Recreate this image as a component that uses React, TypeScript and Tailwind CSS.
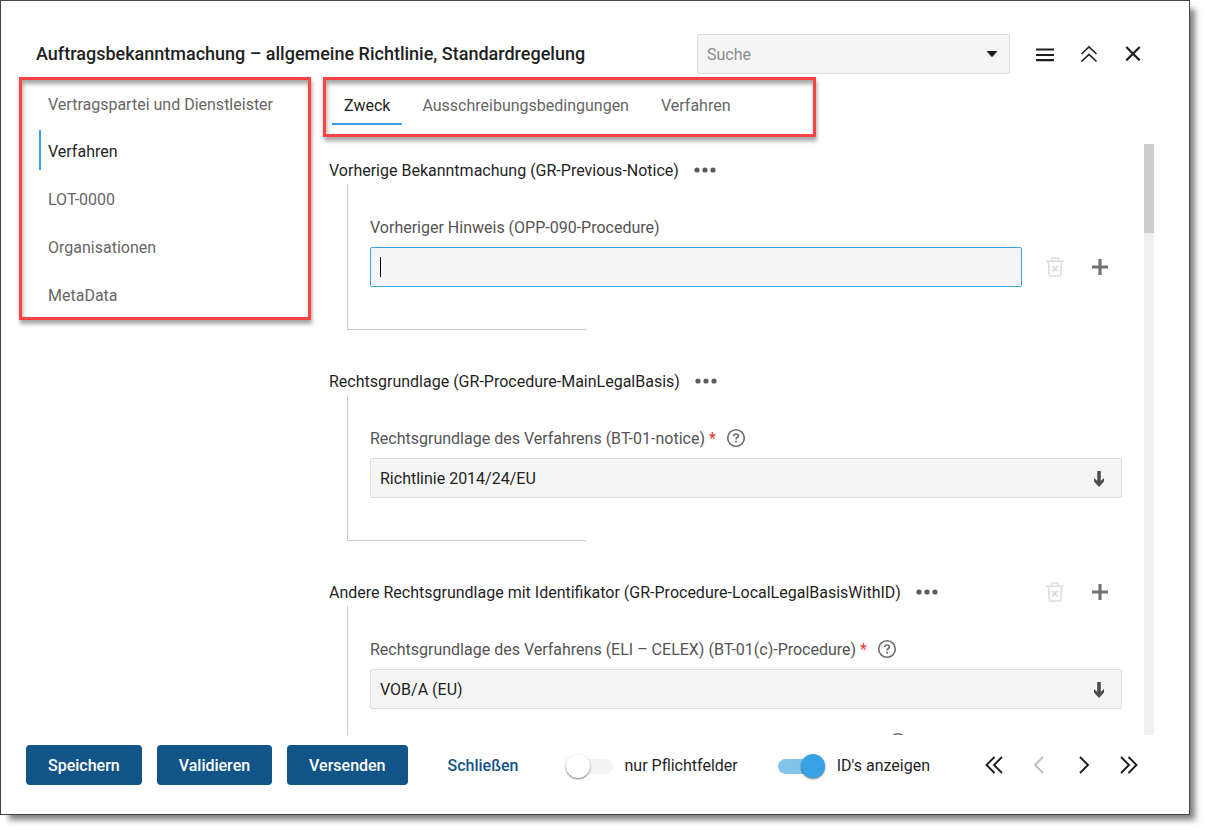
import { useState } from "react"
import type { ReactNode } from "react"
import clsx from "clsx"

const SECTIONS = ["Vertragspartei und Dienstleister", "Verfahren", "LOT-0000", "Organisationen", "MetaData"]
const TABS = ["Zweck", "Ausschreibungsbedingungen", "Verfahren"]

const HIGHLIGHT =
  "border-3 border-[#ff4343] shadow-[1px_4px_4px_rgba(0,0,0,0.35),inset_1px_4px_4px_rgba(0,0,0,0.35)]"

function Chevrons({ d, thin, className }: { d: string; thin?: boolean; className?: string }) {
  return (
    <svg
      viewBox="0 0 20 20"
      className={clsx("size-5", className)}
      fill="none"
      stroke="currentColor"
      strokeWidth={thin ? 1.6 : 1.9}
    >
      <path d={d} />
    </svg>
  )
}

function IconButton({
  label,
  disabled,
  className,
  children,
}: {
  label: string
  disabled?: boolean
  className?: string
  children: ReactNode
}) {
  return (
    <button
      type="button"
      aria-label={label}
      disabled={disabled}
      className={clsx("flex size-5 shrink-0 items-center justify-center", className)}
    >
      {children}
    </button>
  )
}

function HelpButton({ className }: { className?: string }) {
  return (
    <IconButton label="Hilfe" className={clsx("text-[#6e6e6e]", className)}>
      <svg viewBox="0 0 20 20" className="size-5" fill="none" stroke="currentColor">
        <circle cx="10" cy="10" r="8.3" strokeWidth="1.6" />
        <path d="M7.6 8.2C7.6 6.8 8.6 6 10 6s2.4.8 2.4 2c0 1.5-2.4 1.6-2.4 3.4" strokeWidth="1.7" />
        <path d="M10 12.7v1.8" strokeWidth="1.8" />
      </svg>
    </IconButton>
  )
}

function RowActions() {
  return (
    <div className="flex w-[100px] shrink-0 items-center justify-between pr-3 pl-[23px]">
      <IconButton label="Entfernen" disabled className="text-[#dcdcdc]">
        <svg viewBox="0 0 20 20" className="size-5" fill="none" stroke="currentColor" strokeWidth="1.6">
          <path d="M1.5 4.3h17M6.6 4V1.9c0-.5.4-.9.9-.9h5c.5 0 .9.4.9.9V4" />
          <path d="M3.4 4.5l.8 13.2c0 .8.6 1.3 1.3 1.3h9c.7 0 1.3-.5 1.3-1.3l.8-13.2" />
          <path d="M7.3 8.8l5.4 5.6M12.7 8.8l-5.4 5.6" strokeWidth="1.8" />
        </svg>
      </IconButton>
      <IconButton label="Hinzufügen" className="text-[#737373]">
        <svg viewBox="0 0 20 20" className="size-5" fill="none" stroke="currentColor" strokeWidth="3.2">
          <path d="M2 10h16M10 2v16" />
        </svg>
      </IconButton>
    </div>
  )
}

function Group({
  title,
  actions,
  open,
  children,
}: {
  title: string
  actions?: boolean
  open?: boolean
  children: ReactNode
}) {
  return (
    <section className="mb-[37px]">
      <div className="flex h-7 items-center">
        <h2 className="pt-0.5">{title}</h2>
        <IconButton label="Mehr" className="ml-4 text-[#5c5c5c]">
          <svg viewBox="0 0 22 20" className="h-5 w-[22px] shrink-0" fill="currentColor">
            <circle cx="3" cy="10" r="2.6" />
            <circle cx="11" cy="10" r="2.6" />
            <circle cx="19" cy="10" r="2.6" />
          </svg>
        </IconButton>
        {actions && (
          <div className="ml-auto">
            <RowActions />
          </div>
        )}
      </div>
      <div className="ml-[18px] border-l border-[#cbcbcb]">
        <div className="pt-[31px] pb-[42px] pl-[22px]">{children}</div>
        {!open && <div className="h-px w-[238px] bg-[#cbcbcb]" />}
      </div>
    </section>
  )
}

function SelectField({ id, label, value }: { id: string; label: string; value: string }) {
  return (
    <div>
      <div className="flex h-6 items-center">
        <label htmlFor={id} className="pt-0.5 text-[#545454]">
          {label} <span className="text-[#f03434]">*</span>
        </label>
        <HelpButton className="ml-2.5" />
      </div>
      <div className="relative mt-2">
        <select
          id={id}
          defaultValue={value}
          className="h-10 w-full appearance-none rounded-xs border border-[#dcdcdc] bg-[#f5f5f5] px-[9px] pt-0.5"
        >
          <option>{value}</option>
        </select>
        <svg
          viewBox="0 0 12 18"
          className="pointer-events-none absolute top-3 right-[17px] h-[18px] w-3 text-[#4d4d4d]"
          fill="none"
          stroke="currentColor"
        >
          <path d="M6 1v13" strokeWidth="3.6" />
          <path d="M1 8l5 4.5L11 8v3.5l-5 5.5-5-5.5z" fill="currentColor" stroke="none" />
        </svg>
      </div>
    </div>
  )
}

function Toggle({
  label,
  checked,
  onChange,
}: {
  label: string
  checked: boolean
  onChange: (v: boolean) => void
}) {
  return (
    <label className="flex cursor-pointer items-center">
      <input
        type="checkbox"
        role="switch"
        checked={checked}
        onChange={(e) => onChange(e.target.checked)}
        className="sr-only"
      />
      <span
        className={clsx(
          "flex h-[15px] w-[47px] items-center rounded-full",
          checked ? "justify-end bg-[#84c4ea]" : "bg-[#f4f4f4]",
        )}
      >
        <span
          className={clsx(
            "size-6 rounded-full shadow-[0_1px_2px_rgba(0,0,0,0.55)]",
            checked ? "bg-[#37a3e6]" : "bg-white",
          )}
        />
      </span>
      <span className="ml-3">{label}</span>
    </label>
  )
}

export default function App() {
  const [section, setSection] = useState(1)
  const [tab, setTab] = useState(0)
  const [requiredOnly, setRequiredOnly] = useState(false)
  const [showIds, setShowIds] = useState(true)

  return (
    <div className="h-screen overflow-hidden bg-white pr-[15px] pb-[15px] font-['Roboto',sans-serif] text-base text-[#1f1f1f]">
      <div className="flex h-full flex-col border border-[#444] bg-white shadow-[7px_7px_6px_-2px_rgba(0,0,0,0.5)]">
        {/* Title bar */}
        <header className="flex h-[76px] shrink-0 items-center pt-[30px] pr-[46px] pl-[35px]">
          <h1 className="text-lg font-medium">
            Auftragsbekanntmachung – allgemeine Richtlinie, Standardregelung
          </h1>
          <div className="ml-auto flex h-10 w-[313px] items-center rounded-xs border border-[#dcdcdc] bg-[#f5f5f5] pr-[7px] pl-[9px]">
            <input
              type="text"
              aria-label="Suche"
              placeholder="Suche"
              className="min-w-0 flex-1 pt-0.5 outline-none placeholder:text-[#8c8c8c]"
            />
            <IconButton label="Suche öffnen">
              <svg viewBox="0 0 20 20" className="size-5" fill="currentColor">
                <path d="M4.5 7h11L11 12.2q-1 1-2 0z" />
              </svg>
            </IconButton>
          </div>
          <div className="ml-[25px] flex items-center gap-6">
            <IconButton label="Menü">
              <svg viewBox="0 0 20 20" className="size-5" fill="none" stroke="currentColor" strokeWidth="2.2">
                <path d="M1 5.5h18M1 11h18M1 16.2h18" />
              </svg>
            </IconButton>
            <IconButton label="Einklappen">
              <Chevrons thin d="M2.5 10L10 2.8l7.5 7.2M2.5 17.5L10 10.3l7.5 7.2" />
            </IconButton>
            <IconButton label="Schließen">
              <svg viewBox="0 0 20 20" className="size-5" fill="none" stroke="currentColor" strokeWidth="2.2">
                <path d="M3.3 3l13.4 13.4M16.7 3L3.3 16.4" />
              </svg>
            </IconButton>
          </div>
        </header>

        <div className="flex min-h-0 flex-1 gap-3 pr-[35px] pl-[18px]">
          {/* Sections */}
          <nav className={clsx("w-[292px] shrink-0 self-start pl-[17px]", HIGHLIGHT)}>
            {SECTIONS.map((name, i) => (
              <div key={name} className="flex h-12 items-center first:h-[46px] last:h-[47px]">
                <button
                  type="button"
                  onClick={() => setSection(i)}
                  className={clsx(
                    "h-10 border-l-2 pt-1 pl-[7px]",
                    i === section ? "border-[#37a3e6] text-[#1f1f1f]" : "border-transparent text-[#666]",
                  )}
                >
                  {name}
                </button>
              </div>
            ))}
          </nav>

          <main className="flex min-w-0 flex-1 flex-col">
            {/* Tabs */}
            <div
              role="tablist"
              className={clsx("flex h-[60px] w-[493px] shrink-0 gap-2 pt-[5px] pl-[6px]", HIGHLIGHT)}
            >
              {TABS.map((name, i) => (
                <button
                  key={name}
                  type="button"
                  role="tab"
                  aria-selected={i === tab}
                  onClick={() => setTab(i)}
                  className={clsx(
                    "h-10 border-y-2 border-t-transparent px-3 pt-0.5",
                    i === tab ? "border-b-[#37a3e6] text-[#1f1f1f]" : "border-b-transparent text-[#666]",
                  )}
                >
                  {name}
                </button>
              ))}
            </div>

            <div className="mt-[7px] flex min-h-0 flex-1">
              <div className="min-w-0 flex-1 overflow-hidden pt-3 pr-[22px] pl-[6px]">
                <Group title="Vorherige Bekanntmachung (GR-Previous-Notice)">
                  <label htmlFor="opp-090" className="flex h-6 items-center pt-0.5 text-[#545454]">
                    Vorheriger Hinweis (OPP-090-Procedure)
                  </label>
                  <div className="mt-2 flex items-center">
                    <div className="relative flex-1">
                      <input
                        id="opp-090"
                        type="text"
                        className="h-10 w-full rounded-xs border border-[#37a3e6] bg-[#f5f5f5] px-[9px] caret-transparent outline-none"
                      />
                      <span className="absolute top-2.5 left-2.5 h-5 w-px bg-black" />
                    </div>
                    <RowActions />
                  </div>
                </Group>

                <Group title="Rechtsgrundlage (GR-Procedure-MainLegalBasis)">
                  <SelectField
                    id="bt-01-notice"
                    label="Rechtsgrundlage des Verfahrens (BT-01-notice)"
                    value="Richtlinie 2014/24/EU"
                  />
                </Group>

                <Group title="Andere Rechtsgrundlage mit Identifikator (GR-Procedure-LocalLegalBasisWithID)" actions open>
                  <SelectField
                    id="bt-01-c"
                    label="Rechtsgrundlage des Verfahrens (ELI – CELEX) (BT-01(c)-Procedure)"
                    value="VOB/A (EU)"
                  />
                  <div className="mt-[21px] flex h-6 items-center">
                    <HelpButton className="ml-[518px]" />
                  </div>
                </Group>
              </div>
              {/* Scrollbar */}
              <div className="w-2.5 shrink-0 bg-[#f0f0f0]">
                <div className="h-[15%] bg-[#cdcdcd]" />
              </div>
            </div>
          </main>
        </div>

        <footer className="flex shrink-0 items-center pt-2.5 pr-[50px] pb-[29px] pl-[25px]">
          <div className="flex gap-[15px] font-medium text-white">
            {["Speichern", "Validieren", "Versenden"].map((name) => (
              <button key={name} type="button" className="h-10 rounded-sm bg-[#115488] px-[22px] pt-0.5">
                {name}
              </button>
            ))}
          </div>
          <button type="button" className="ml-5 h-10 px-5 pt-0.5 font-medium text-[#115488]">
            Schließen
          </button>
          <div className="ml-[27px] flex gap-10 pt-0.5">
            <Toggle label="nur Pflichtfelder" checked={requiredOnly} onChange={setRequiredOnly} />
            <Toggle label="ID's anzeigen" checked={showIds} onChange={setShowIds} />
          </div>
          <div className="ml-auto flex gap-[25px]">
            <IconButton label="Erste Seite">
              <Chevrons d="M10.5 2L2.5 10l8 8M18 2l-8 8 8 8" />
            </IconButton>
            <IconButton label="Zurück" disabled className="text-[#bdbdbd]">
              <Chevrons d="M14 2l-8 8 8 8" />
            </IconButton>
            <IconButton label="Weiter">
              <Chevrons d="M6 2l8 8-8 8" />
            </IconButton>
            <IconButton label="Letzte Seite">
              <Chevrons d="M2 2l8 8-8 8M9.5 2l8 8-8 8" />
            </IconButton>
          </div>
        </footer>
      </div>
    </div>
  )
}
